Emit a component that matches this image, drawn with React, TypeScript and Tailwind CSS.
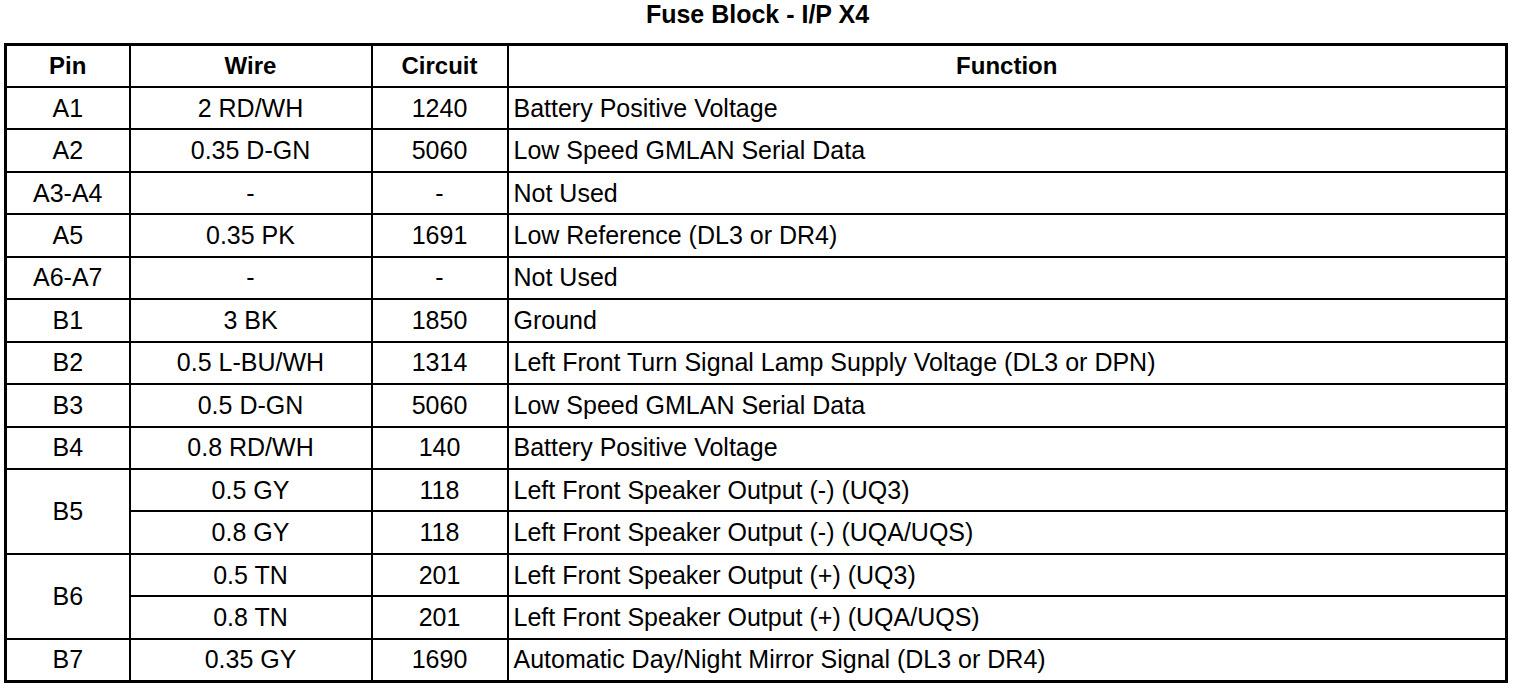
type Row = { pin: string; wires: { wire: string; circuit: string; fn: string }[] };

const rows: Row[] = [
  { pin: "A1", wires: [{ wire: "2 RD/WH", circuit: "1240", fn: "Battery Positive Voltage" }] },
  { pin: "A2", wires: [{ wire: "0.35 D-GN", circuit: "5060", fn: "Low Speed GMLAN Serial Data" }] },
  { pin: "A3-A4", wires: [{ wire: "-", circuit: "-", fn: "Not Used" }] },
  { pin: "A5", wires: [{ wire: "0.35 PK", circuit: "1691", fn: "Low Reference (DL3 or DR4)" }] },
  { pin: "A6-A7", wires: [{ wire: "-", circuit: "-", fn: "Not Used" }] },
  { pin: "B1", wires: [{ wire: "3 BK", circuit: "1850", fn: "Ground" }] },
  {
    pin: "B2",
    wires: [{ wire: "0.5 L-BU/WH", circuit: "1314", fn: "Left Front Turn Signal Lamp Supply Voltage (DL3 or DPN)" }],
  },
  { pin: "B3", wires: [{ wire: "0.5 D-GN", circuit: "5060", fn: "Low Speed GMLAN Serial Data" }] },
  { pin: "B4", wires: [{ wire: "0.8 RD/WH", circuit: "140", fn: "Battery Positive Voltage" }] },
  {
    pin: "B5",
    wires: [
      { wire: "0.5 GY", circuit: "118", fn: "Left Front Speaker Output (-) (UQ3)" },
      { wire: "0.8 GY", circuit: "118", fn: "Left Front Speaker Output (-) (UQA/UQS)" },
    ],
  },
  {
    pin: "B6",
    wires: [
      { wire: "0.5 TN", circuit: "201", fn: "Left Front Speaker Output (+) (UQ3)" },
      { wire: "0.8 TN", circuit: "201", fn: "Left Front Speaker Output (+) (UQA/UQS)" },
    ],
  },
  { pin: "B7", wires: [{ wire: "0.35 GY", circuit: "1690", fn: "Automatic Day/Night Mirror Signal (DL3 or DR4)" }] },
];

export default function App() {
  return (
    <div className="w-[1520px] h-[688px] bg-white text-black font-['Liberation_Sans',Arial,sans-serif]">
      {/* Title */}
      <div className="h-[43px] pl-[4px] w-[1511px] flex justify-center items-start pt-[2px]">
        <h1 className="text-[25px] font-bold leading-[25px]">Fuse Block - I/P X4</h1>
      </div>

      <table className="ml-[4px] w-[1504px] table-fixed border-collapse border-[3px] border-black text-[25px] leading-none">
        <colgroup>
          <col className="w-[124px]" />
          <col className="w-[242px]" />
          <col className="w-[136px]" />
          <col />
        </colgroup>
        <thead>
          <tr className="h-[42.5px] text-[24px]">
            <th className="border-2 border-black font-bold">Pin</th>
            <th className="border-2 border-black font-bold">Wire</th>
            <th className="border-2 border-black font-bold">Circuit</th>
            <th className="border-2 border-black font-bold">Function</th>
          </tr>
        </thead>
        <tbody>
          {rows.map((r) =>
            r.wires.map((w, i) => (
              <tr key={r.pin + i} className="h-[42.45px]">
                {i === 0 && (
                  <td rowSpan={r.wires.length} className="border-2 border-black text-center">
                    {r.pin}
                  </td>
                )}
                <td className="border-2 border-black text-center">{w.wire}</td>
                <td className="border-2 border-black text-center">{w.circuit}</td>
                <td className="border-2 border-black pl-[5px] text-left whitespace-nowrap">{w.fn}</td>
              </tr>
            ))
          )}
        </tbody>
      </table>
    </div>
  );
}
